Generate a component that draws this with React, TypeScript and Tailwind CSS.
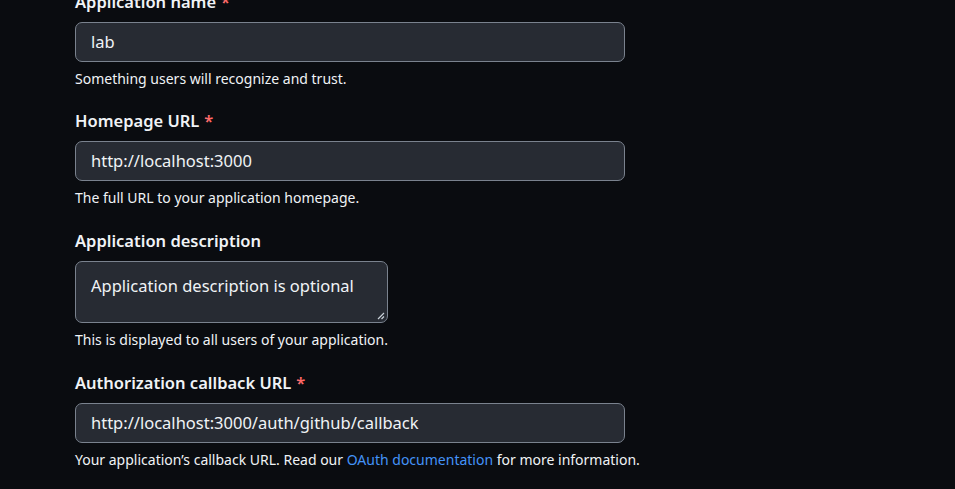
const font = { fontFamily: '"Noto Sans", "Open Sans", sans-serif' };

interface FieldProps {
  label: string;
  required?: boolean;
  value: string;
  note: React.ReactNode;
  multiline?: boolean;
}

const Field = ({ label, required, value, note, multiline }: FieldProps) => (
  <div className="flex flex-col">
    <div className="h-[24px] flex items-center text-[16.5px] font-semibold text-[#f0f3f6] leading-none">
      {label}
      {required && <span className="ml-[5px] text-[#ff6a69]">*</span>}
    </div>
    {multiline ? (
      <div className="relative mt-[8px] w-[313px] h-[62px] rounded-[7px] border border-[#7a828e] bg-[#272b33] pl-[15px] pt-[12px] text-[16.5px] leading-[24px] text-[#f0f3f6]">
        {value}
        <svg
          className="absolute right-[2px] bottom-[2px]"
          width="8"
          height="8"
          viewBox="0 0 8 8"
        >
          <path d="M7 1 L1 7 M7 4.5 L4.5 7" stroke="#c9d1d9" strokeWidth="1.2" />
        </svg>
      </div>
    ) : (
      <div className="mt-[8px] w-[550px] h-[40px] flex items-center rounded-[7px] border border-[#7a828e] bg-[#272b33] pl-[15px] text-[16.5px] text-[#f0f3f6]">
        {value}
      </div>
    )}
    <div className="mt-[7px] h-[18px] flex items-center text-[14px] text-[#f0f3f6]">
      {note}
    </div>
  </div>
);

const App = () => {
  return (
    <div
      className="w-[955px] h-[489px] overflow-hidden bg-[#0a0c10]"
      style={font}
    >
      <div className="pl-[75px] mt-[-10px] flex flex-col gap-[22px]">
        <Field
          label="Application name"
          required
          value="lab"
          note="Something users will recognize and trust."
        />
        <Field
          label="Homepage URL"
          required
          value="http://localhost:3000"
          note="The full URL to your application homepage."
        />
        <div className="pt-[1px]">
          <Field
            label="Application description"
            value="Application description is optional"
            note="This is displayed to all users of your application."
            multiline
          />
        </div>
        <div className="pt-[1px]">
          <Field
            label="Authorization callback URL"
            required
            value="http://localhost:3000/auth/github/callback"
            note={
              <span>
                Your application’s callback URL. Read our{" "}
                <a className="text-[#4493f8]">OAuth documentation</a> for more
                information.
              </span>
            }
          />
        </div>
      </div>
    </div>
  );
};

export default App;
